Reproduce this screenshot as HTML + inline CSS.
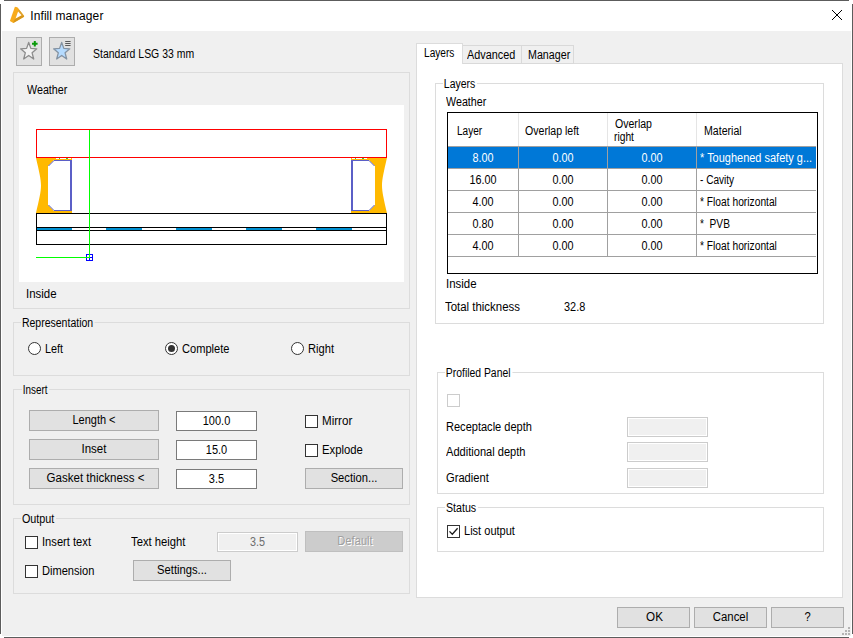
<!DOCTYPE html>
<html>
<head>
<meta charset="utf-8">
<title>Infill manager</title>
<style>
html,body{margin:0;padding:0;}
body{width:853px;height:638px;overflow:hidden;background:#fff;position:relative;
 font-family:"Liberation Sans",sans-serif;font-size:11px;color:#000;}
*{box-sizing:border-box;}
.abs,.t,.btn,.tb,.cb,.rb,.gb,.ln{position:absolute;}
.t{white-space:nowrap;line-height:13px;height:13px;font-size:12px;transform:scaleX(var(--s,.9));transform-origin:0 50%;}
.t.c{transform-origin:50% 50%;}
.btn{background:#e1e1e1;border:1px solid #adadad;text-align:center;line-height:13px;}
.btn span{position:absolute;left:0;right:0;white-space:nowrap;font-size:12px;transform:scaleX(var(--s,.93));}
.tb{background:#fff;border:1px solid #7a7a7a;text-align:center;}
.tb span{position:absolute;left:0;right:0;white-space:nowrap;line-height:13px;font-size:12px;transform:scaleX(var(--s,.915));}
.cb{width:13px;height:13px;background:#fff;border:1px solid #333;}
.rb{width:13px;height:13px;background:#fff;border:1px solid #333;border-radius:50%;}
.gb{border:1px solid #dcdcdc;}
.lbl{position:absolute;white-space:nowrap;line-height:13px;height:13px;padding:0 2px 0 1px;font-size:12px;transform:scaleX(var(--s,.9));transform-origin:0 50%;}
.dtb{position:absolute;background:#f0f0f0;border:1px solid #ccc;box-shadow:inset 0 0 0 1px #fff;}
</style>
</head>
<body>
<!-- window frame -->
<div class="abs" id="client" style="left:2px;top:31px;width:849px;height:605px;background:#f0f0f0;"></div>
<div class="abs" style="left:4px;top:0;width:845px;height:1px;background:#5c5c5c;"></div>
<div class="abs" style="left:4px;top:637px;width:845px;height:1px;background:#5c5c5c;"></div>
<div class="abs" style="left:0;top:4px;width:1px;height:630px;background:#5c5c5c;"></div>
<div class="abs" style="left:852px;top:4px;width:1px;height:630px;background:#5c5c5c;"></div>

<!-- title bar -->
<svg class="abs" style="left:0;top:0" width="60" height="31" viewBox="0 0 60 31">
 <polygon points="14.9,6.7 17.3,7.3 24.2,15.9 23.7,17.1 13.3,22.9 9.9,20.9" fill="#f8ab1b"/>
 <polygon points="13.3,22.9 23.7,17.1 24.2,15.9 21.6,15.2 15.4,18.7 14.3,20" fill="#d6951a"/>
 <polygon points="17.3,7.3 24.2,15.9 21.6,15.2 18.1,11.2 18.6,9.4" fill="#dda231"/>
 <polygon points="18.1,11.4 21.5,15.2 15.6,18.5" fill="#fff"/>
</svg>
<div class="t" id="title" style="--s:1;letter-spacing:0.08px;left:30.3px;top:9px;font-size:12px;line-height:14px;height:14px;">Infill manager</div>
<svg class="abs" style="left:832px;top:10px" width="10" height="10" viewBox="0 0 10 10" shape-rendering="crispEdges">
 <path d="M0 0h1v1h-1zM1 1h1v1h-1zM2 2h1v1h-1zM3 3h1v1h-1zM4 4h2v2h-2zM6 6h1v1h-1zM7 7h1v1h-1zM8 8h1v1h-1zM9 9h1v1h-1zM9 0h1v1h-1zM8 1h1v1h-1zM7 2h1v1h-1zM6 3h1v1h-1zM3 6h1v1h-1zM2 7h1v1h-1zM1 8h1v1h-1zM0 9h1v1h-1z" fill="#000"/>
</svg>

<!-- star buttons -->
<div class="btn" style="left:16px;top:37px;width:26px;height:29px;"></div>
<div class="btn" style="left:49px;top:37px;width:26px;height:29px;"></div>
<svg class="abs" style="left:16px;top:37px" width="60" height="29" viewBox="16 37 60 29">
 <polygon points="28.7,42.4 30.8,48.4 36.8,48.8 32.1,52.8 33.7,59.0 28.7,55.5 23.7,59.0 25.3,52.8 20.6,48.8 26.6,48.4" fill="#f2f2f2" stroke="#8c8c8c" stroke-width="1.3" stroke-linejoin="round"/>
 <path d="M32 43.8 H37.6 M34.8 41 V46.6" stroke="#0a9a0a" stroke-width="2" fill="none"/>
 <polygon points="61.7,42.4 63.8,48.4 69.8,48.8 65.1,52.8 66.7,59.0 61.7,55.5 56.7,59.0 58.3,52.8 53.6,48.8 59.6,48.4" fill="#b5dbff" stroke="#8493a3" stroke-width="1.3" stroke-linejoin="round"/>
 <path d="M65.2 41.5 H70.6 M65.2 43.5 H70.6 M65.2 45.5 H70.6" stroke="#5a5a5a" stroke-width="1" fill="none"/>
</svg>
<div class="t" id="std" style="--s:0.871;left:93.1px;top:48px;">Standard LSG 33 mm</div>

<!-- group 1: preview -->
<div class="gb" style="left:13px;top:72px;width:397px;height:237px;"></div>
<div class="t" id="w1" style="--s:0.893;left:27px;top:84px;">Weather</div>
<div class="abs" style="left:19px;top:105px;width:385px;height:177px;background:#fff;"></div>
<svg class="abs" style="left:19px;top:105px" width="385" height="177" viewBox="19 105 385 177" shape-rendering="crispEdges">
 <!-- yellow sealant left -->
 <path d="M36 158 H72 V160 H54 L48 166 V205 L54 211 H72 V213 H36 C39 200 41 192 41 185.5 C41 179 39 171 36 158 Z" fill="#ffb900" shape-rendering="auto"/>
 <path d="M386.9 158 H351 V160 H369 L375 166 V205 L369 211 H351 V213 H386.9 C384 200 382 192 382 185.5 C382 179 384 171 386.9 158 Z" fill="#ffb900" shape-rendering="auto"/>
 <!-- spacers -->
 <path d="M48.5 166 L54 160.5 H70.5 M48.5 205 L54 210.5 H70.5" stroke="#5b5fc7" stroke-width="1" fill="none" shape-rendering="auto"/>
 <rect x="70" y="160" width="2" height="51" fill="#5b5fc7"/>
 <path d="M374.5 166 L369 160.5 H352.5 M374.5 205 L369 210.5 H352.5" stroke="#5b5fc7" stroke-width="1" fill="none" shape-rendering="auto"/>
 <rect x="351" y="160" width="2" height="51" fill="#5b5fc7"/>
 <rect x="56" y="158" width="15" height="1" fill="#fff"/>
 <rect x="59" y="158" width="1" height="1" fill="#3c3"/><rect x="66" y="158" width="2" height="1" fill="#3c3"/>
 <rect x="352" y="158" width="15" height="1" fill="#fff"/>
 <rect x="355" y="158" width="1" height="1" fill="#3c3"/><rect x="362" y="158" width="2" height="1" fill="#3c3"/>
 <!-- red glass -->
 <rect x="36.5" y="129.5" width="350" height="28" fill="none" stroke="#ff0000" stroke-width="1"/>
 <!-- black glass -->
 <rect x="36.5" y="213.5" width="350" height="14" fill="#fff" stroke="#000" stroke-width="1"/>
 <rect x="36.5" y="230.5" width="350" height="14" fill="#fff" stroke="#000" stroke-width="1"/>
 <rect x="37" y="228" width="349" height="2" fill="#fff"/>
 <g fill="#0090d2">
  <rect x="37" y="228" width="35" height="2"/><rect x="106" y="228" width="36" height="2"/><rect x="176" y="228" width="36" height="2"/><rect x="246" y="228" width="36" height="2"/><rect x="316" y="228" width="36" height="2"/>
 </g>
 <rect x="36" y="228" width="1" height="2" fill="#000"/><rect x="386" y="228" width="1" height="2" fill="#000"/>
 <!-- handle -->
 <rect x="86.5" y="254.5" width="6" height="6" fill="none" stroke="#0000ff"/>
 <rect x="89" y="254" width="1" height="7" fill="#0000ff"/><rect x="86" y="257" width="7" height="1" fill="#0000ff"/>
 <!-- green -->
 <rect x="89" y="130" width="1" height="128" fill="#00ff00"/>
 <rect x="36" y="257" width="54" height="1" fill="#00ff00"/>
</svg>
<div class="t" id="in1" style="--s:0.955;left:26.4px;top:288px;">Inside</div>

<!-- Representation -->
<div class="gb" style="left:13px;top:322px;width:397px;height:54px;"></div>
<div class="lbl" id="rep" style="--s:0.876;left:21.3px;top:317px;background:#f0f0f0;">Representation</div>
<div class="rb" style="left:28px;top:342px;"></div>
<div class="t" id="left" style="--s:0.9;left:44.5px;top:343px;">Left</div>
<div class="rb" style="left:165px;top:342px;"></div>
<div class="abs" style="left:168px;top:345px;width:7px;height:7px;border-radius:50%;background:#333;"></div>
<div class="t" id="complete" style="--s:0.923;left:182px;top:343px;">Complete</div>
<div class="rb" style="left:291px;top:342px;"></div>
<div class="t" id="right" style="--s:0.928;left:307.7px;top:343px;">Right</div>

<!-- Insert -->
<div class="gb" style="left:13px;top:389px;width:397px;height:116px;"></div>
<div class="lbl" id="ins" style="--s:0.824;left:21.7px;top:384px;background:#f0f0f0;">Insert</div>
<div class="btn" style="left:29px;top:410px;width:130px;height:21px;"><span style="--s:0.916;top:3px;">Length &lt;</span></div>
<div class="btn" style="left:29px;top:439px;width:130px;height:21px;"><span style="--s:0.96;top:3px;">Inset</span></div>
<div class="btn" style="left:29px;top:468px;width:130px;height:21px;"><span style="--s:0.961;top:3px;left:3px;">Gasket thickness &lt;</span></div>
<div class="tb" style="left:176px;top:411px;width:81px;height:20px;"><span style="top:3px;">100.0</span></div>
<div class="tb" style="left:176px;top:440px;width:81px;height:20px;"><span style="top:3px;">15.0</span></div>
<div class="tb" style="left:176px;top:469px;width:81px;height:20px;"><span style="top:3px;">3.5</span></div>
<div class="cb" style="left:305px;top:415px;"></div>
<div class="t" id="mirror" style="--s:0.967;left:322.2px;top:415px;">Mirror</div>
<div class="cb" style="left:305px;top:444px;"></div>
<div class="t" id="explode" style="--s:0.942;left:322.2px;top:444px;">Explode</div>
<div class="btn" style="left:305px;top:468px;width:98px;height:21px;"><span style="--s:0.934;top:3px;">Section...</span></div>

<!-- Output -->
<div class="gb" style="left:13px;top:518px;width:397px;height:76px;"></div>
<div class="lbl" id="out" style="--s:0.899;left:21.0px;top:513px;background:#f0f0f0;">Output</div>
<div class="cb" style="left:25px;top:536px;"></div>
<div class="t" id="instext" style="--s:0.93;left:42.0px;top:536px;">Insert text</div>
<div class="t" id="texth" style="--s:0.939;left:130.8px;top:536px;">Text height</div>
<div class="dtb" style="left:217px;top:532px;width:81px;height:20px;"></div>
<div class="t c" id="d35" style="left:217px;top:536px;width:81px;text-align:center;color:#6d6d6d;">3.5</div>
<div class="btn" style="left:305px;top:531px;width:98px;height:21px;background:#ccc;border-color:#bfbfbf;color:#a0a0a0;text-shadow:1px 1px 0 #fff;"><span style="top:3px;left:2px;">Default</span></div>
<div class="cb" style="left:25px;top:565px;"></div>
<div class="t" id="dim" style="--s:0.924;left:41.9px;top:565px;">Dimension</div>
<div class="btn" style="left:133px;top:560px;width:98px;height:21px;"><span style="--s:0.935;top:3px;">Settings...</span></div>

<!-- Tab control -->
<div class="abs" style="left:416px;top:63px;width:427px;height:535px;background:#fff;border:1px solid #dcdcdc;"></div>
<div class="abs" style="left:462px;top:45px;width:60px;height:19px;background:#f0f0f0;border:1px solid #d9d9d9;"></div>
<div class="abs" style="left:521px;top:45px;width:53px;height:19px;background:#f0f0f0;border:1px solid #d9d9d9;"></div>
<div class="abs" style="left:416px;top:43px;width:47px;height:21px;background:#fff;border:1px solid #dcdcdc;border-bottom:none;"></div>
<div class="t" id="tab1" style="--s:0.845;left:424.3px;top:47px;">Layers</div>
<div class="t" id="tab2" style="--s:0.904;left:467px;top:49px;">Advanced</div>
<div class="t" id="tab3" style="--s:0.891;left:528.1px;top:49px;">Manager</div>

<!-- Layers group -->
<div class="gb" style="left:435px;top:83px;width:389px;height:241px;"></div>
<div class="lbl" id="lay" style="--s:0.871;left:443.0px;top:78px;background:#fff;">Layers</div>
<div class="t" id="w2" style="--s:0.893;left:446px;top:96px;">Weather</div>
<div class="abs" style="left:447px;top:112px;width:371px;height:162px;background:#fff;border:1px solid #000;"></div>
<!-- header separators -->
<div class="ln" style="left:518px;top:113px;width:1px;height:33px;background:#e5e5e5;"></div>
<div class="ln" style="left:607px;top:113px;width:1px;height:33px;background:#e5e5e5;"></div>
<div class="ln" style="left:696px;top:113px;width:1px;height:33px;background:#e5e5e5;"></div>
<div class="t" id="h1" style="--s:0.836;left:457.2px;top:125px;">Layer</div>
<div class="t" id="h2" style="--s:0.881;left:525.4px;top:125px;">Overlap left</div>
<div class="t" id="h3a" style="--s:0.88;left:614.7px;top:118px;">Overlap</div>
<div class="t" id="h3b" style="--s:0.855;left:614px;top:131px;">right</div>
<div class="t" id="h4" style="--s:0.882;left:703.6px;top:125px;">Material</div>
<!-- rows -->
<div class="abs" style="left:448px;top:147px;width:368px;height:21px;background:#0078d7;"></div>
<div class="ln" style="left:448px;top:146px;width:368px;height:1px;background:#a0a0a0;"></div>
<div class="ln" style="left:448px;top:168px;width:368px;height:1px;background:#a0a0a0;"></div>
<div class="ln" style="left:448px;top:190px;width:368px;height:1px;background:#a0a0a0;"></div>
<div class="ln" style="left:448px;top:212px;width:368px;height:1px;background:#a0a0a0;"></div>
<div class="ln" style="left:448px;top:234px;width:368px;height:1px;background:#a0a0a0;"></div>
<div class="ln" style="left:448px;top:256px;width:368px;height:1px;background:#a0a0a0;"></div>
<div class="ln" style="left:518px;top:147px;width:1px;height:109px;background:#a0a0a0;"></div>
<div class="ln" style="left:607px;top:147px;width:1px;height:109px;background:#a0a0a0;"></div>
<div class="ln" style="left:696px;top:147px;width:1px;height:109px;background:#a0a0a0;"></div>

<div class="t c" style="left:448px;top:152px;width:70px;text-align:center;color:#fff;">8.00</div>
<div class="t c" style="left:519px;top:152px;width:88px;text-align:center;color:#fff;">0.00</div>
<div class="t c" style="left:608px;top:152px;width:88px;text-align:center;color:#fff;">0.00</div>
<div class="t" id="m1" style="--s:0.915;left:700px;top:152px;color:#fff;">* Toughened safety g...</div>

<div class="t c" style="left:448px;top:174px;width:70px;text-align:center;">16.00</div>
<div class="t c" style="left:519px;top:174px;width:88px;text-align:center;">0.00</div>
<div class="t c" style="left:608px;top:174px;width:88px;text-align:center;">0.00</div>
<div class="t" id="m2" style="--s:0.84;left:699.9px;top:174px;">- Cavity</div>

<div class="t c" style="left:448px;top:196px;width:70px;text-align:center;">4.00</div>
<div class="t c" style="left:519px;top:196px;width:88px;text-align:center;">0.00</div>
<div class="t c" style="left:608px;top:196px;width:88px;text-align:center;">0.00</div>
<div class="t" id="m3" style="--s:0.854;left:700px;top:196px;">* Float horizontal</div>

<div class="t c" style="left:448px;top:218px;width:70px;text-align:center;">0.80</div>
<div class="t c" style="left:519px;top:218px;width:88px;text-align:center;">0.00</div>
<div class="t c" style="left:608px;top:218px;width:88px;text-align:center;">0.00</div>
<div class="t" id="m4" style="--s:0.846;left:700px;top:218px;white-space:pre;">*  PVB</div>

<div class="t c" style="left:448px;top:240px;width:70px;text-align:center;">4.00</div>
<div class="t c" style="left:519px;top:240px;width:88px;text-align:center;">0.00</div>
<div class="t c" style="left:608px;top:240px;width:88px;text-align:center;">0.00</div>
<div class="t" id="m5" style="--s:0.854;left:700px;top:240px;">* Float horizontal</div>

<div class="t" id="in2" style="--s:0.955;left:445.5px;top:278px;">Inside</div>
<div class="t" id="tt" style="--s:0.952;left:445.4px;top:301px;">Total thickness</div>
<div class="t" id="tv" style="--s:0.91;left:563.5px;top:301px;">32.8</div>

<!-- Profiled Panel -->
<div class="gb" style="left:437px;top:372px;width:387px;height:122px;"></div>
<div class="lbl" id="pp" style="--s:0.865;left:445.0px;top:367px;background:#fff;">Profiled Panel</div>
<div class="abs" style="left:447px;top:394px;width:13px;height:13px;background:#fff;border:1px solid #ccc;"></div>
<div class="t" id="rd" style="--s:0.92;left:445.5px;top:421px;">Receptacle depth</div>
<div class="t" id="ad" style="--s:0.924;left:445.5px;top:446px;">Additional depth</div>
<div class="t" id="gr" style="--s:0.93;left:445.5px;top:472px;">Gradient</div>
<div class="dtb" style="left:627px;top:417px;width:81px;height:20px;"></div>
<div class="dtb" style="left:627px;top:442px;width:81px;height:20px;"></div>
<div class="dtb" style="left:627px;top:468px;width:81px;height:20px;"></div>

<!-- Status -->
<div class="gb" style="left:437px;top:507px;width:387px;height:45px;"></div>
<div class="lbl" id="st" style="--s:0.89;left:445.4px;top:502px;background:#fff;">Status</div>
<div class="cb" style="left:447px;top:525px;"></div>
<svg class="abs" style="left:447px;top:525px" width="13" height="13" viewBox="0 0 13 13"><path d="M2.5 6.4 L5.3 9.3 L10.6 3.3" stroke="#1a1a1a" stroke-width="1.3" fill="none"/></svg>
<div class="t" id="lo" style="--s:0.92;left:464.0px;top:525px;">List output</div>

<!-- bottom buttons -->
<div class="btn" style="left:617px;top:607px;width:73px;height:21px;"><span style="--s:0.973;top:3px;left:2px;">OK</span></div>
<div class="btn" style="left:694px;top:607px;width:73px;height:21px;"><span style="--s:0.949;top:3px;">Cancel</span></div>
<div class="btn" style="left:771px;top:607px;width:73px;height:21px;"><span style="top:3px;">?</span></div>
<!-- size grip -->
<svg class="abs" style="left:840px;top:625px" width="11" height="11" viewBox="840 625 11 11" shape-rendering="crispEdges">
 <g fill="#b4b4b4"><rect x="848" y="627" width="2" height="2"/><rect x="845" y="630" width="2" height="2"/><rect x="848" y="630" width="2" height="2"/><rect x="842" y="633" width="2" height="2"/><rect x="845" y="633" width="2" height="2"/><rect x="848" y="633" width="2" height="2"/></g>
</svg>
</body>
</html>
